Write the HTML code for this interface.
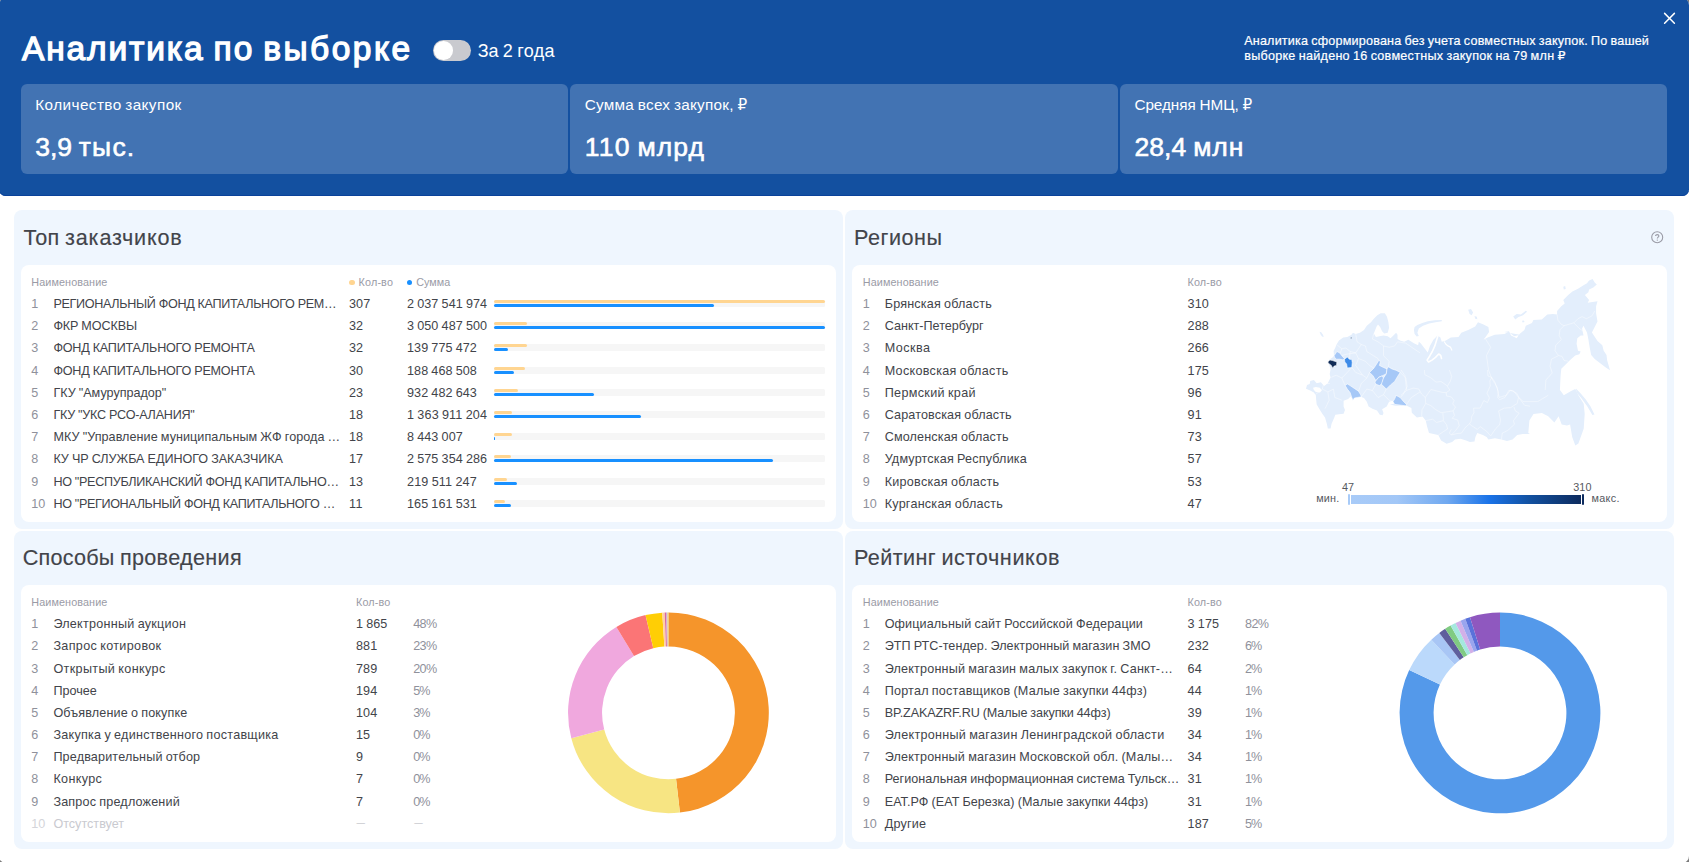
<!DOCTYPE html>
<html lang="ru"><head><meta charset="utf-8"><title>Аналитика по выборке</title><style>
html,body{margin:0;padding:0}
body{width:1689px;height:862px;overflow:hidden;background:#7a7a7a;position:relative;font-family:"Liberation Sans", "DejaVu Sans", sans-serif;}
h1,h2{margin:0;padding:0}
.b{position:absolute;display:block}
.t{position:absolute;white-space:pre;font-family:"Liberation Sans", "DejaVu Sans", sans-serif;font-weight:400}
</style></head><body>
<div class="modal">
<div class="b" style="left:-1.00px;top:-2.00px;width:1690.00px;height:865.00px;background:#fff;border-radius:7px;"></div>
<header>
<div class="b" style="left:-1.00px;top:-2.00px;width:1690.00px;height:198.00px;background:#1350a0;border-radius:7px 7px 6.5px 6.5px;box-shadow:inset 0 -1px 0 #0a429a;"></div>
<div class="b" style="left:21.00px;top:83.90px;width:546.85px;height:89.90px;background:rgba(255,255,255,0.2);border-radius:6px;"></div>
<div class="b" style="left:570.13px;top:83.90px;width:547.77px;height:89.90px;background:rgba(255,255,255,0.2);border-radius:6px;"></div>
<div class="b" style="left:1120.05px;top:83.90px;width:547.45px;height:89.90px;background:rgba(255,255,255,0.2);border-radius:6px;"></div>
<div class="b" style="left:432.80px;top:40.00px;width:38.20px;height:21.00px;background:#c9cacf;border-radius:10.5px;"></div>
<div class="b" style="left:434.30px;top:41.20px;width:18.60px;height:18.60px;background:#fff;border-radius:9.3px;"></div>
<svg class="b" style="left:1662px;top:11px" width="15" height="15" viewBox="0 0 15 15"><path d="M2.6 2.4 L12.4 12.2 M12.4 2.4 L2.6 12.2" stroke="#fff" stroke-width="1.5" stroke-linecap="round" fill="none"/></svg>
<h1 class="t" style="left:22.00px;top:25.00px;font-size:33.5px;line-height:47px;color:#fff;letter-spacing:2.115px;word-spacing:-2.483px;-webkit-text-stroke:1.3px #fff;"><span style="position:absolute;left:0.00px;top:0;letter-spacing:1.847px">Аналитика</span> <span style="position:absolute;left:191.41px;top:0;letter-spacing:2.109px">по</span> <span style="position:absolute;left:241.34px;top:0;letter-spacing:2.458px">выборке</span></h1>
<div class="t" style="left:477.80px;top:39.00px;font-size:18px;line-height:25px;color:#fff;letter-spacing:0.152px;word-spacing:-0.683px;"><span style="position:absolute;left:0.00px;top:0;letter-spacing:-0.203px">За</span> <span style="position:absolute;left:24.95px;top:0;letter-spacing:0.109px">2</span> <span style="position:absolute;left:39.53px;top:0;letter-spacing:0.340px">года</span></div>
<div class="t" style="left:1244.20px;top:32.00px;font-size:12.6px;line-height:18px;color:#fff;letter-spacing:0.187px;word-spacing:-0.600px;-webkit-text-stroke:0.2px #fff;">Аналитика сформирована без учета совместных закупок. По вашей</div>
<div class="t" style="left:1244.20px;top:47.00px;font-size:12.6px;line-height:18px;color:#fff;letter-spacing:0.262px;word-spacing:-0.654px;-webkit-text-stroke:0.2px #fff;">выборке найдено 16 совместных закупок на 79 млн ₽</div>
<div class="t" style="left:35.30px;top:94.00px;font-size:15.3px;line-height:21px;color:#fff;letter-spacing:0.417px;word-spacing:-1.042px;">Количество закупок</div>
<div class="t" style="left:35.30px;top:129.00px;font-size:26.5px;line-height:37px;color:#fff;letter-spacing:0.690px;word-spacing:-1.346px;-webkit-text-stroke:0.6px #fff;"><span style="position:absolute;left:0.00px;top:0;letter-spacing:-0.036px">3,9</span> <span style="position:absolute;left:43.45px;top:0;letter-spacing:1.234px">тыс.</span></div>
<div class="t" style="left:584.80px;top:94.00px;font-size:15.3px;line-height:21px;color:#fff;letter-spacing:0.246px;word-spacing:-0.761px;">Сумма всех закупок, ₽</div>
<div class="t" style="left:584.80px;top:129.00px;font-size:26.5px;line-height:37px;color:#fff;letter-spacing:1.125px;word-spacing:-1.781px;-webkit-text-stroke:0.6px #fff;"><span style="position:absolute;left:0.00px;top:0;letter-spacing:1.266px">110</span> <span style="position:absolute;left:52.75px;top:0;letter-spacing:1.020px">млрд</span></div>
<div class="t" style="left:1134.40px;top:94.00px;font-size:15.3px;line-height:21px;color:#fff;letter-spacing:-0.053px;word-spacing:-0.400px;">Средняя НМЦ, ₽</div>
<div class="t" style="left:1134.40px;top:129.00px;font-size:26.5px;line-height:37px;color:#fff;letter-spacing:0.473px;word-spacing:-1.114px;-webkit-text-stroke:0.6px #fff;"><span style="position:absolute;left:0.00px;top:0;letter-spacing:0.125px">28,4</span> <span style="position:absolute;left:58.80px;top:0;letter-spacing:0.938px">млн</span></div>
</header>
<main>
<section>
<div class="b" style="left:14.00px;top:210.00px;width:829.00px;height:319.00px;background:#eff6fe;border-radius:8px;"></div>
<div class="b" style="left:21.00px;top:265.00px;width:815.00px;height:257.00px;background:#fff;border-radius:8px;"></div>
<div class="b" style="left:349.00px;top:279.70px;width:5.60px;height:5.60px;background:#ffd591;border-radius:3px;"></div>
<div class="b" style="left:406.90px;top:280.00px;width:5.20px;height:5.20px;background:#1890ff;border-radius:3px;"></div>
<div class="b" style="left:493.90px;top:300.00px;width:331.20px;height:7.00px;background:#f6f6f6;border-radius:1.5px;"></div>
<div class="b" style="left:493.90px;top:300.00px;width:331.20px;height:3.00px;background:#ffd591;border-radius:1.5px;"></div>
<div class="b" style="left:493.90px;top:304.00px;width:220.42px;height:3.00px;background:#1890ff;border-radius:1.5px;"></div>
<div class="b" style="left:493.90px;top:322.00px;width:331.20px;height:7.00px;background:#f6f6f6;border-radius:1.5px;"></div>
<div class="b" style="left:493.90px;top:322.00px;width:32.96px;height:3.00px;background:#ffd591;border-radius:1.5px;"></div>
<div class="b" style="left:493.90px;top:326.00px;width:331.20px;height:3.00px;background:#1890ff;border-radius:1.5px;"></div>
<div class="b" style="left:493.90px;top:344.00px;width:331.20px;height:7.00px;background:#f6f6f6;border-radius:1.5px;"></div>
<div class="b" style="left:493.90px;top:344.00px;width:32.96px;height:3.00px;background:#ffd591;border-radius:1.5px;"></div>
<div class="b" style="left:493.90px;top:348.00px;width:14.38px;height:3.00px;background:#1890ff;border-radius:1.5px;"></div>
<div class="b" style="left:493.90px;top:367.00px;width:331.20px;height:7.00px;background:#f6f6f6;border-radius:1.5px;"></div>
<div class="b" style="left:493.90px;top:367.00px;width:30.90px;height:3.00px;background:#ffd591;border-radius:1.5px;"></div>
<div class="b" style="left:493.90px;top:371.00px;width:19.66px;height:3.00px;background:#1890ff;border-radius:1.5px;"></div>
<div class="b" style="left:493.90px;top:389.00px;width:331.20px;height:7.00px;background:#f6f6f6;border-radius:1.5px;"></div>
<div class="b" style="left:493.90px;top:389.00px;width:23.69px;height:3.00px;background:#ffd591;border-radius:1.5px;"></div>
<div class="b" style="left:493.90px;top:393.00px;width:100.44px;height:3.00px;background:#1890ff;border-radius:1.5px;"></div>
<div class="b" style="left:493.90px;top:411.00px;width:331.20px;height:7.00px;background:#f6f6f6;border-radius:1.5px;"></div>
<div class="b" style="left:493.90px;top:411.00px;width:18.54px;height:3.00px;background:#ffd591;border-radius:1.5px;"></div>
<div class="b" style="left:493.90px;top:415.00px;width:147.28px;height:3.00px;background:#1890ff;border-radius:1.5px;"></div>
<div class="b" style="left:493.90px;top:433.00px;width:331.20px;height:7.00px;background:#f6f6f6;border-radius:1.5px;"></div>
<div class="b" style="left:493.90px;top:433.00px;width:18.54px;height:3.00px;background:#ffd591;border-radius:1.5px;"></div>
<div class="b" style="left:493.90px;top:437.00px;width:0.12px;height:3.00px;background:#1890ff;border-radius:1.5px;"></div>
<div class="b" style="left:493.90px;top:455.00px;width:331.20px;height:7.00px;background:#f6f6f6;border-radius:1.5px;"></div>
<div class="b" style="left:493.90px;top:455.00px;width:17.51px;height:3.00px;background:#ffd591;border-radius:1.5px;"></div>
<div class="b" style="left:493.90px;top:459.00px;width:278.81px;height:3.00px;background:#1890ff;border-radius:1.5px;"></div>
<div class="b" style="left:493.90px;top:478.00px;width:331.20px;height:7.00px;background:#f6f6f6;border-radius:1.5px;"></div>
<div class="b" style="left:493.90px;top:478.00px;width:13.39px;height:3.00px;background:#ffd591;border-radius:1.5px;"></div>
<div class="b" style="left:493.90px;top:482.00px;width:23.03px;height:3.00px;background:#1890ff;border-radius:1.5px;"></div>
<div class="b" style="left:493.90px;top:500.00px;width:331.20px;height:7.00px;background:#f6f6f6;border-radius:1.5px;"></div>
<div class="b" style="left:493.90px;top:500.00px;width:11.33px;height:3.00px;background:#ffd591;border-radius:1.5px;"></div>
<div class="b" style="left:493.90px;top:504.00px;width:17.13px;height:3.00px;background:#1890ff;border-radius:1.5px;"></div>
<h2 class="t" style="left:23.40px;top:223.00px;font-size:21.6px;line-height:30px;color:#42444a;letter-spacing:0.722px;word-spacing:-1.363px;-webkit-text-stroke:0.15px #42444a;"><span style="position:absolute;left:0.00px;top:0;letter-spacing:0.354px">Топ</span> <span style="position:absolute;left:41.66px;top:0;letter-spacing:0.833px">заказчиков</span></h2>
<div class="t" style="left:31.30px;top:275.00px;font-size:10.8px;line-height:15px;color:#9a9ba6;letter-spacing:0.108px;">Наименование</div>
<div class="t" style="left:358.60px;top:275.00px;font-size:10.8px;line-height:15px;color:#9a9ba6;letter-spacing:0.143px;">Кол-во</div>
<div class="t" style="left:416.20px;top:275.00px;font-size:10.8px;line-height:15px;color:#9a9ba6;letter-spacing:0.019px;">Сумма</div>
<div class="t" style="left:31.30px;top:295.00px;font-size:12.6px;line-height:18px;color:#8f919b;letter-spacing:0.062px;">1</div>
<div class="t" style="left:53.40px;top:295.00px;font-size:12.6px;line-height:18px;color:#42444a;letter-spacing:-0.325px;word-spacing:-0.050px;">РЕГИОНАЛЬНЫЙ ФОНД КАПИТАЛЬНОГО РЕМ…</div>
<div class="t" style="left:349.00px;top:295.00px;font-size:12.6px;line-height:18px;color:#42444a;letter-spacing:0.073px;">307</div>
<div class="t" style="left:407.00px;top:295.00px;font-size:12.6px;line-height:18px;color:#42444a;letter-spacing:0.073px;word-spacing:-0.448px;">2 037 541 974</div>
<div class="t" style="left:31.30px;top:317.00px;font-size:12.6px;line-height:18px;color:#8f919b;letter-spacing:0.062px;">2</div>
<div class="t" style="left:53.40px;top:317.00px;font-size:12.6px;line-height:18px;color:#42444a;letter-spacing:-0.109px;word-spacing:-0.406px;">ФКР МОСКВЫ</div>
<div class="t" style="left:349.00px;top:317.00px;font-size:12.6px;line-height:18px;color:#42444a;letter-spacing:0.070px;">32</div>
<div class="t" style="left:407.00px;top:317.00px;font-size:12.6px;line-height:18px;color:#42444a;letter-spacing:0.073px;word-spacing:-0.448px;">3 050 487 500</div>
<div class="t" style="left:31.30px;top:339.00px;font-size:12.6px;line-height:18px;color:#8f919b;letter-spacing:0.062px;">3</div>
<div class="t" style="left:53.40px;top:339.00px;font-size:12.6px;line-height:18px;color:#42444a;letter-spacing:-0.212px;word-spacing:-0.163px;">ФОНД КАПИТАЛЬНОГО РЕМОНТА</div>
<div class="t" style="left:349.00px;top:339.00px;font-size:12.6px;line-height:18px;color:#42444a;letter-spacing:0.070px;">32</div>
<div class="t" style="left:407.00px;top:339.00px;font-size:12.6px;line-height:18px;color:#42444a;letter-spacing:0.073px;word-spacing:-0.448px;">139 775 472</div>
<div class="t" style="left:31.30px;top:362.00px;font-size:12.6px;line-height:18px;color:#8f919b;letter-spacing:0.062px;">4</div>
<div class="t" style="left:53.40px;top:362.00px;font-size:12.6px;line-height:18px;color:#42444a;letter-spacing:-0.212px;word-spacing:-0.163px;">ФОНД КАПИТАЛЬНОГО РЕМОНТА</div>
<div class="t" style="left:349.00px;top:362.00px;font-size:12.6px;line-height:18px;color:#42444a;letter-spacing:0.070px;">30</div>
<div class="t" style="left:407.00px;top:362.00px;font-size:12.6px;line-height:18px;color:#42444a;letter-spacing:0.073px;word-spacing:-0.448px;">188 468 508</div>
<div class="t" style="left:31.30px;top:384.00px;font-size:12.6px;line-height:18px;color:#8f919b;letter-spacing:0.062px;">5</div>
<div class="t" style="left:53.40px;top:384.00px;font-size:12.6px;line-height:18px;color:#42444a;letter-spacing:-0.015px;word-spacing:-0.360px;">ГКУ &quot;Амурупрадор&quot;</div>
<div class="t" style="left:349.00px;top:384.00px;font-size:12.6px;line-height:18px;color:#42444a;letter-spacing:0.070px;">23</div>
<div class="t" style="left:407.00px;top:384.00px;font-size:12.6px;line-height:18px;color:#42444a;letter-spacing:0.073px;word-spacing:-0.448px;">932 482 643</div>
<div class="t" style="left:31.30px;top:406.00px;font-size:12.6px;line-height:18px;color:#8f919b;letter-spacing:0.062px;">6</div>
<div class="t" style="left:53.40px;top:406.00px;font-size:12.6px;line-height:18px;color:#42444a;letter-spacing:-0.235px;word-spacing:-0.140px;">ГКУ &quot;УКС РСО-АЛАНИЯ&quot;</div>
<div class="t" style="left:349.00px;top:406.00px;font-size:12.6px;line-height:18px;color:#42444a;letter-spacing:0.070px;">18</div>
<div class="t" style="left:407.00px;top:406.00px;font-size:12.6px;line-height:18px;color:#42444a;letter-spacing:0.167px;word-spacing:-0.542px;">1 363 911 204</div>
<div class="t" style="left:31.30px;top:428.00px;font-size:12.6px;line-height:18px;color:#8f919b;letter-spacing:0.062px;">7</div>
<div class="t" style="left:53.40px;top:428.00px;font-size:12.6px;line-height:18px;color:#42444a;letter-spacing:0.052px;word-spacing:-0.427px;">МКУ &quot;Управление муниципальным ЖФ города …</div>
<div class="t" style="left:349.00px;top:428.00px;font-size:12.6px;line-height:18px;color:#42444a;letter-spacing:0.070px;">18</div>
<div class="t" style="left:407.00px;top:428.00px;font-size:12.6px;line-height:18px;color:#42444a;letter-spacing:0.074px;word-spacing:-0.449px;">8 443 007</div>
<div class="t" style="left:31.30px;top:450.00px;font-size:12.6px;line-height:18px;color:#8f919b;letter-spacing:0.062px;">8</div>
<div class="t" style="left:53.40px;top:450.00px;font-size:12.6px;line-height:18px;color:#42444a;letter-spacing:-0.034px;word-spacing:-0.377px;">КУ ЧР СЛУЖБА ЕДИНОГО ЗАКАЗЧИКА</div>
<div class="t" style="left:349.00px;top:450.00px;font-size:12.6px;line-height:18px;color:#42444a;letter-spacing:0.070px;">17</div>
<div class="t" style="left:407.00px;top:450.00px;font-size:12.6px;line-height:18px;color:#42444a;letter-spacing:0.073px;word-spacing:-0.448px;">2 575 354 286</div>
<div class="t" style="left:31.30px;top:473.00px;font-size:12.6px;line-height:18px;color:#8f919b;letter-spacing:0.062px;">9</div>
<div class="t" style="left:53.40px;top:473.00px;font-size:12.6px;line-height:18px;color:#42444a;letter-spacing:-0.302px;word-spacing:-0.079px;">НО &quot;РЕСПУБЛИКАНСКИЙ ФОНД КАПИТАЛЬНО…</div>
<div class="t" style="left:349.00px;top:473.00px;font-size:12.6px;line-height:18px;color:#42444a;letter-spacing:0.070px;">13</div>
<div class="t" style="left:407.00px;top:473.00px;font-size:12.6px;line-height:18px;color:#42444a;letter-spacing:0.177px;word-spacing:-0.552px;">219 511 247</div>
<div class="t" style="left:31.30px;top:495.00px;font-size:12.6px;line-height:18px;color:#8f919b;letter-spacing:0.070px;">10</div>
<div class="t" style="left:53.40px;top:495.00px;font-size:12.6px;line-height:18px;color:#42444a;letter-spacing:-0.360px;word-spacing:0.142px;">НО &quot;РЕГИОНАЛЬНЫЙ ФОНД КАПИТАЛЬНОГО …</div>
<div class="t" style="left:349.00px;top:495.00px;font-size:12.6px;line-height:18px;color:#42444a;letter-spacing:0.539px;">11</div>
<div class="t" style="left:407.00px;top:495.00px;font-size:12.6px;line-height:18px;color:#42444a;letter-spacing:0.073px;word-spacing:-0.448px;">165 161 531</div>
</section>
<section>
<div class="b" style="left:845.00px;top:210.00px;width:829.00px;height:319.00px;background:#eff6fe;border-radius:8px;"></div>
<div class="b" style="left:852.00px;top:265.00px;width:815.00px;height:257.00px;background:#fff;border-radius:8px;"></div>
<svg class="b" style="left:1650px;top:230px" width="15" height="15" viewBox="0 0 15 15"><circle cx="7.2" cy="7.2" r="5.5" fill="none" stroke="#9a9ba6" stroke-width="1.1"/><path d="M5.6 5.9 C5.6 4.2 8.9 4.2 8.9 6 C8.9 7.1 7.3 7.3 7.3 8.6" fill="none" stroke="#9a9ba6" stroke-width="1.1"/><circle cx="7.3" cy="10.1" r="0.7" fill="#9a9ba6"/></svg>
<svg class="b" style="left:1300px;top:270px" width="320" height="190" viewBox="1300 270 320 190"><g stroke="#fff" stroke-width="0.6" stroke-linejoin="round"><polygon points="1336.5,344.5 1339.0,340.4 1343.2,337.6 1347.3,336.9 1351.5,334.8 1352.9,332.7 1355.7,334.1 1359.9,332.7 1364.0,329.9 1366.8,325.8 1371.0,322.3 1373.8,318.8 1377.3,315.3 1380.7,313.2 1384.9,313.2 1387.0,316.7 1388.4,322.3 1389.1,327.8 1387.7,332.7 1384.2,333.4 1382.1,331.3 1380.1,327.1 1378.0,324.4 1376.6,326.5 1375.2,329.9 1373.8,333.4 1375.9,336.9 1379.4,336.2 1383.5,335.5 1387.7,336.2 1390.5,338.3 1392.6,336.2 1396.1,332.7 1397.5,334.8 1397.5,339.0 1400.2,340.4 1400.0,340.4 1404.2,341.8 1408.4,339.7 1413.9,343.2 1418.1,345.2 1418.8,341.8 1420.9,343.4 1423.7,347.3 1427.8,352.6 1429.9,345.9 1433.4,339.7 1437.6,335.5 1440.4,337.6 1441.8,341.8 1445.9,340.4 1450.8,337.6 1458.5,336.9 1461.3,332.7 1468.2,329.9 1475.2,326.5 1478.0,322.3 1483.5,324.4 1488.4,327.1 1489.1,332.0 1485.6,336.9 1483.5,339.7 1487.7,337.6 1494.7,334.8 1504.4,334.1 1508.6,332.0 1514.2,336.2 1520.0,334.8 1504.2,332.0 1509.0,331.3 1511.1,335.4 1516.7,338.2 1519.5,334.0 1524.4,329.9 1525.8,325.7 1532.0,322.9 1533.4,320.1 1541.8,319.4 1547.3,314.5 1552.9,313.9 1557.1,314.5 1557.1,311.1 1561.3,306.2 1564.7,303.4 1563.3,299.9 1568.2,295.1 1572.4,291.6 1578.0,288.8 1583.5,285.3 1587.0,283.2 1589.1,280.4 1592.6,279.0 1594.7,282.5 1596.8,284.6 1593.3,287.4 1589.1,289.5 1588.4,292.3 1584.9,295.1 1589.1,299.9 1587.7,302.7 1597.5,301.3 1596.1,306.2 1596.1,313.2 1597.5,321.5 1594.7,327.1 1591.9,332.6 1594.7,336.8 1597.5,341.0 1602.3,345.2 1603.7,350.7 1606.5,354.9 1607.2,360.5 1610.0,370.2 1605.8,367.5 1600.2,363.3 1594.7,359.1 1591.2,354.9 1589.8,348.0 1588.4,339.6 1587.0,332.6 1584.9,328.5 1583.5,325.7 1582.1,328.5 1583.5,335.4 1580.7,335.4 1577.3,338.2 1576.6,343.8 1578.0,350.7 1580.7,351.4 1579.4,354.2 1575.2,355.6 1569.6,360.5 1565.4,364.7 1561.3,368.8 1560.6,375.8 1559.9,390.0 1560.7,391.1 1563.8,395.3 1571.1,391.1 1575.3,389.0 1578.4,395.3 1583.7,403.7 1584.7,414.1 1583.7,428.7 1578.4,443.4 1575.3,445.4 1572.2,437.1 1570.1,424.6 1567.0,425.6 1561.7,424.6 1558.6,416.2 1554.4,422.5 1548.2,416.2 1541.9,413.1 1533.5,414.1 1529.4,420.4 1528.3,432.9 1530.0,434.1 1522.8,434.1 1517.2,435.0 1512.6,439.6 1507.0,441.0 1501.4,439.6 1494.9,438.2 1488.4,439.6 1486.6,436.9 1482.9,435.0 1477.3,433.1 1475.4,436.9 1474.5,441.5 1469.9,442.0 1466.1,440.6 1460.6,438.7 1455.0,439.6 1452.2,442.0 1446.6,443.8 1441.1,440.6 1438.3,435.0 1433.6,434.1 1429.0,433.1 1427.1,426.6 1425.7,420.6 1422.5,416.4 1416.9,417.4 1411.8,412.7 1411.4,408.1 1406.7,405.7 1395.6,405.7 1390.0,404.4 1394.6,403.6 1392.8,400.8 1389.1,401.7 1386.7,406.4 1382.1,409.2 1383.5,412.9 1382.6,415.2 1379.8,414.7 1377.0,410.6 1372.4,408.7 1368.6,406.4 1366.8,401.7 1364.0,398.0 1361.2,397.1 1354.7,397.6 1352.9,400.4 1352.4,398.0 1350.6,396.6 1348.2,399.0 1343.6,400.8 1343.6,406.4 1345.0,410.1 1343.6,413.8 1339.0,414.3 1335.3,414.7 1334.3,417.5 1331.5,424.0 1330.6,428.6 1327.8,428.6 1326.9,424.0 1325.0,417.5 1322.3,413.8 1319.5,409.2 1316.7,404.5 1316.2,399.9 1315.8,395.3 1313.9,392.5 1310.2,390.6 1306.0,388.8 1307.0,385.0 1309.7,384.1 1310.2,380.9 1313.9,379.9 1316.7,383.2 1320.9,382.3 1324.1,386.0 1327.8,383.2 1330.6,377.6 1329.7,373.9 1330.6,369.3 1328.8,363.7 1329.5,359.5 1332.5,357.5 1334.0,355.7 1333.6,351.0 1335.4,347.5" fill="#e3eefc" stroke="none"/><polygon points="1319.5,331.7 1321.2,332.3 1323.0,334.8 1323.7,336.9 1322.0,336.5 1320.6,334.5" fill="#e3eefc" stroke="none"/><polygon points="1575.9,388.6 1580.5,393.2 1585.8,399.5 1590.4,406.2 1594.5,414.5 1592.4,414.9 1587.2,406.2 1581.6,398.4 1576.6,392.4" fill="#e3eefc" stroke="none"/><polygon points="1413.9,329.9 1414.6,327.1 1417.4,325.1 1422.3,323.0 1427.8,321.2 1434.8,320.3 1441.8,319.9 1441.8,321.2 1435.5,322.3 1429.2,323.4 1423.0,325.8 1418.8,328.5 1417.4,332.7 1418.8,335.9 1416.7,336.5 1414.6,334.1" fill="#e3eefc" stroke="none"/><polygon points="1468.2,309.7 1471.0,309.0 1473.1,312.5 1471.7,315.3 1469.6,313.9" fill="#e3eefc" stroke="none"/><polygon points="1474.5,316.0 1476.8,316.7 1477.4,319.2 1475.2,318.8" fill="#e3eefc" stroke="none"/><polygon points="1513.2,316.6 1516.7,313.9 1520.9,314.5 1525.8,310.7 1527.1,311.8 1523.0,315.2 1518.1,317.3 1515.3,319.4" fill="#e3eefc" stroke="none"/><polygon points="1522.0,320.8 1523.9,320.4 1524.5,322.1 1522.6,322.5" fill="#e3eefc" stroke="none"/><polygon points="1563.3,286.7 1565.2,286.1 1565.7,288.9 1563.8,289.5" fill="#e3eefc" stroke="none"/><polygon points="1313.0,387.8 1315.8,387.1 1319.9,387.8 1321.8,390.6 1319.9,392.5 1315.8,392.0 1313.9,390.1" fill="#fff" stroke="none"/><polygon points="1334.1,355.7 1336.9,351.5 1339.7,352.9 1341.8,355.7 1344.3,358.5 1343.2,359.9 1339.7,359.2 1336.5,359.2 1334.8,357.8" fill="#a6c8f7"/><polygon points="1369.6,372.4 1373.8,368.2 1376.6,364.0 1378.7,360.6 1380.5,361.3 1379.4,365.4 1383.5,367.5 1387.0,368.9 1386.3,373.8 1382.1,375.9 1378.7,377.3 1375.9,380.7 1373.1,375.9 1371.0,373.8" fill="#a6c8f7"/><polygon points="1375.9,380.7 1378.7,377.3 1382.1,375.9 1383.5,378.0 1382.1,383.5 1379.4,385.6 1375.9,384.2 1374.9,382.1" fill="#a6c8f7"/><polygon points="1387.0,368.9 1388.4,366.8 1391.9,368.9 1396.1,370.3 1400.2,372.4 1397.5,376.6 1394.7,381.4 1390.5,384.9 1386.3,389.1 1382.8,385.6 1381.4,384.2 1383.5,378.0 1386.3,373.8" fill="#a6c8f7"/><polygon points="1345.2,385.6 1347.3,383.9 1350.1,385.6 1354.3,388.4 1358.5,391.2 1360.6,394.7 1361.3,396.8 1357.1,397.5 1354.3,398.1 1352.9,400.2 1351.8,397.5 1350.1,392.6 1347.3,389.1" fill="#a6c8f7"/><polygon points="1396.1,395.4 1400.2,397.5 1403.0,400.9 1406.5,404.4 1405.8,405.8 1400.2,405.1 1394.7,404.4 1393.0,401.6 1394.7,398.8" fill="#a6c8f7"/><polygon points="1344.5,359.2 1347.3,357.1 1349.4,359.2 1351.8,359.6 1352.2,362.6 1351.8,367.5 1347.3,367.9 1346.6,364.0 1344.8,362.0" fill="#3d8be8"/><polygon points="1327.8,362.0 1329.9,359.9 1332.7,360.6 1336.9,362.0 1336.5,365.4 1334.1,366.1 1332.7,368.2 1331.3,365.4 1328.5,363.3" fill="#0f2b57"/><polyline points="1437.9,335.9 1436.5,340.4 1434.8,345.9 1432.3,351.5 1429.9,355.7 1427.1,360.1 1428.5,362.0 1432.0,360.1 1435.5,357.4 1438.7,354.0 1440.7,355.4 1441.5,358.5" fill="none" stroke="#fff" stroke-width="1.6" stroke-linecap="round"/><polyline points="1444.3,341.8 1445.9,344.3 1448.0,345.9 1450.4,347.1 1451.8,350.1" fill="none" stroke="#fff" stroke-width="1.2" stroke-linecap="round"/><polyline points="1485.5,338.9 1490.7,347.3 1486.5,355.6 1488.6,370.3 1491.8,378.6 1497.0,387.0 1499.1,397.4 1506.4,395.3 1510.6,390.1 1516.8,393.2 1518.9,397.4 1523.1,401.6 1537.7,401.6 1548.2,395.3" fill="none" stroke="#fff" stroke-width="0.7" stroke-opacity="0.6"/><polyline points="1557.1,314.5 1557.8,320.1 1561.3,324.3 1564.0,325.7 1559.9,329.9 1559.2,335.4 1561.3,339.6 1555.7,345.2 1555.0,350.7 1558.5,355.6 1551.5,359.1 1550.1,366.1 1552.2,373.0 1545.9,380.0 1545.2,390.0" fill="none" stroke="#fff" stroke-width="0.7" stroke-opacity="0.6"/><polyline points="1564.0,325.7 1573.8,322.9 1578.0,318.7 1582.1,316.6 1586.3,318.7 1591.9,315.9 1594.7,311.1" fill="none" stroke="#fff" stroke-width="0.7" stroke-opacity="0.6"/><polyline points="1573.8,322.9 1579.4,328.5 1583.5,331.3" fill="none" stroke="#fff" stroke-width="0.7" stroke-opacity="0.6"/><polyline points="1558.5,355.6 1562.0,356.3 1564.0,360.5 1568.2,361.2" fill="none" stroke="#fff" stroke-width="0.7" stroke-opacity="0.6"/><polyline points="1424.4,370.0 1424.8,374.6 1430.9,377.9 1436.0,382.1 1441.1,381.6 1446.6,385.3 1449.9,390.0 1446.2,392.7 1446.6,396.0 1451.3,396.9 1454.1,400.6 1452.7,403.9 1455.5,407.1 1453.1,410.9 1454.5,415.5 1452.2,418.3 1457.8,420.1 1459.2,425.7 1455.0,431.3 1451.3,435.0" fill="none" stroke="#fff" stroke-width="0.7" stroke-opacity="0.6"/><polyline points="1449.4,370.0 1451.7,376.5 1450.4,381.1 1447.6,385.8" fill="none" stroke="#fff" stroke-width="0.7" stroke-opacity="0.6"/><polyline points="1401.1,395.1 1406.7,390.4 1413.2,388.1 1418.8,389.0 1421.6,394.1 1425.3,397.4 1430.9,389.5 1436.4,390.9 1442.0,392.3 1446.2,392.7" fill="none" stroke="#fff" stroke-width="0.7" stroke-opacity="0.6"/><polyline points="1425.3,397.4 1425.7,403.4 1422.0,409.9 1421.6,416.0" fill="none" stroke="#fff" stroke-width="0.7" stroke-opacity="0.6"/><polyline points="1425.7,403.4 1430.9,405.7 1435.5,409.5 1441.1,412.7 1453.1,410.9" fill="none" stroke="#fff" stroke-width="0.7" stroke-opacity="0.6"/><polyline points="1442.9,413.2 1443.4,420.6 1446.6,424.8 1447.6,429.0 1443.9,431.3 1438.3,435.0" fill="none" stroke="#fff" stroke-width="0.7" stroke-opacity="0.6"/><polyline points="1425.7,420.6 1432.7,419.2 1436.4,422.5 1443.4,420.6" fill="none" stroke="#fff" stroke-width="0.7" stroke-opacity="0.6"/><polyline points="1487.5,370.0 1488.0,376.0 1491.7,377.4 1489.8,381.1 1490.3,385.8 1487.0,393.2 1489.4,397.9 1487.5,402.5 1483.8,400.6 1480.1,408.1 1473.6,408.1 1474.0,412.7 1471.7,416.4 1471.2,421.1 1469.4,423.9 1471.7,425.7 1477.3,429.4 1480.1,426.6 1486.6,431.3 1490.7,435.9 1495.8,428.5 1499.6,424.8 1500.5,420.1 1498.6,410.9 1504.2,408.1 1510.7,407.6 1517.2,403.4 1518.6,397.4" fill="none" stroke="#fff" stroke-width="0.7" stroke-opacity="0.6"/><polyline points="1491.7,377.4 1494.9,382.1 1498.2,391.4 1497.7,397.9 1499.6,399.7 1505.1,397.4 1508.8,390.4 1513.5,390.9 1518.6,397.4 1524.6,405.3 1530.0,406.2" fill="none" stroke="#fff" stroke-width="0.7" stroke-opacity="0.6"/><polyline points="1469.4,423.9 1465.2,427.6 1461.5,433.1 1456.9,433.6 1451.3,435.0 1449.4,433.1 1451.3,429.4" fill="none" stroke="#fff" stroke-width="0.7" stroke-opacity="0.6"/><polyline points="1514.0,407.1 1515.3,410.9 1519.1,413.2 1513.5,420.6 1514.4,424.3 1507.9,430.4 1502.3,433.1 1501.4,439.6" fill="none" stroke="#fff" stroke-width="0.7" stroke-opacity="0.6"/><polyline points="1401.1,370.0 1404.9,375.6 1405.8,383.0 1406.7,390.4" fill="none" stroke="#fff" stroke-width="0.7" stroke-opacity="0.6"/><polyline points="1336.5,344.5 1341.8,348.7 1345.9,348.0 1350.1,351.5 1355.7,352.9 1361.3,344.5 1365.4,345.9 1366.8,351.5 1372.4,355.0 1378.0,358.5 1378.7,360.6" fill="none" stroke="#fff" stroke-width="0.7" stroke-opacity="0.6"/><polyline points="1355.7,334.1 1357.1,341.8 1361.3,344.5" fill="none" stroke="#fff" stroke-width="0.7" stroke-opacity="0.6"/><polyline points="1373.8,333.4 1372.4,339.0 1378.0,341.8 1383.5,345.9 1389.1,347.3 1394.7,345.9 1397.5,341.8 1405.8,343.2 1420.0,352.9" fill="none" stroke="#fff" stroke-width="0.7" stroke-opacity="0.6"/><polyline points="1383.5,345.9 1383.5,355.7 1389.1,361.3 1388.4,366.8" fill="none" stroke="#fff" stroke-width="0.7" stroke-opacity="0.6"/><polyline points="1341.8,355.7 1345.9,354.3 1355.7,352.9 1358.5,358.5 1365.4,361.3 1369.6,365.4 1373.8,368.2" fill="none" stroke="#fff" stroke-width="0.7" stroke-opacity="0.6"/><polyline points="1351.8,367.5 1355.7,372.4 1362.6,375.2 1366.8,378.0 1369.6,372.4" fill="none" stroke="#fff" stroke-width="0.7" stroke-opacity="0.6"/><polyline points="1331.3,377.3 1336.2,375.2 1341.8,378.0 1345.2,385.6" fill="none" stroke="#fff" stroke-width="0.7" stroke-opacity="0.6"/><polyline points="1341.8,378.0 1347.3,372.4 1351.8,367.5" fill="none" stroke="#fff" stroke-width="0.7" stroke-opacity="0.6"/><polyline points="1361.3,396.8 1366.8,389.1 1372.4,390.5 1375.9,384.2" fill="none" stroke="#fff" stroke-width="0.7" stroke-opacity="0.6"/><polyline points="1372.4,390.5 1378.0,397.5 1383.5,394.7 1386.3,389.1" fill="none" stroke="#fff" stroke-width="0.7" stroke-opacity="0.6"/><polyline points="1383.5,394.7 1389.1,400.2 1393.0,401.6" fill="none" stroke="#fff" stroke-width="0.7" stroke-opacity="0.6"/><polyline points="1400.2,372.4 1405.8,378.0 1407.2,386.3 1403.0,394.7 1400.2,397.5" fill="none" stroke="#fff" stroke-width="0.7" stroke-opacity="0.6"/><polyline points="1406.5,404.4 1411.4,397.5 1420.0,391.9" fill="none" stroke="#fff" stroke-width="0.7" stroke-opacity="0.6"/><polyline points="1315.3,394.7 1322.3,389.1 1327.8,391.9 1333.4,389.1 1334.8,397.5 1341.8,400.2" fill="none" stroke="#fff" stroke-width="0.7" stroke-opacity="0.6"/><polyline points="1322.3,389.1 1323.7,383.5 1329.9,383.5" fill="none" stroke="#fff" stroke-width="0.7" stroke-opacity="0.6"/><polyline points="1327.8,391.9 1329.2,400.2 1325.1,408.6" fill="none" stroke="#fff" stroke-width="0.7" stroke-opacity="0.6"/><polyline points="1358.5,358.5 1355.7,365.4 1362.6,375.2" fill="none" stroke="#fff" stroke-width="0.7" stroke-opacity="0.6"/><polyline points="1366.8,378.0 1361.3,383.5 1358.5,391.2" fill="none" stroke="#fff" stroke-width="0.7" stroke-opacity="0.6"/><polyline points="1341.8,348.7 1340.4,352.9" fill="none" stroke="#fff" stroke-width="0.7" stroke-opacity="0.6"/><polyline points="1350.1,351.5 1349.4,359.2" fill="none" stroke="#fff" stroke-width="0.7" stroke-opacity="0.6"/><circle cx="1351.2" cy="337.9" r="0.7" fill="#7d8fa8" stroke="none"/></g></svg>
<div class="b" style="left:1350.60px;top:495.20px;width:230.60px;height:9.00px;background:linear-gradient(90deg,#a8cbf8 0%,#a2c7f7 20%,#6fa8f0 42%,#1a73e8 60%,#12509f 78%,#0d2b5e 100%);border-radius:0px;"></div>
<div class="b" style="left:1347.60px;top:494.20px;width:2.00px;height:10.80px;background:#a8cbf8;border-radius:1px;"></div>
<div class="b" style="left:1582.20px;top:494.20px;width:2.00px;height:10.80px;background:#0d2b5e;border-radius:1px;"></div>
<h2 class="t" style="left:854.00px;top:223.00px;font-size:21.6px;line-height:30px;color:#42444a;letter-spacing:0.529px;-webkit-text-stroke:0.15px #42444a;">Регионы</h2>
<div class="t" style="left:862.80px;top:275.00px;font-size:10.8px;line-height:15px;color:#9a9ba6;letter-spacing:0.108px;">Наименование</div>
<div class="t" style="left:1187.50px;top:275.00px;font-size:10.8px;line-height:15px;color:#9a9ba6;letter-spacing:0.143px;">Кол-во</div>
<div class="t" style="left:862.70px;top:295.00px;font-size:12.6px;line-height:18px;color:#8f919b;letter-spacing:0.062px;">1</div>
<div class="t" style="left:884.70px;top:295.00px;font-size:12.6px;line-height:18px;color:#42444a;letter-spacing:0.178px;word-spacing:-0.537px;">Брянская область</div>
<div class="t" style="left:1187.60px;top:295.00px;font-size:12.6px;line-height:18px;color:#42444a;letter-spacing:0.073px;">310</div>
<div class="t" style="left:862.70px;top:317.00px;font-size:12.6px;line-height:18px;color:#8f919b;letter-spacing:0.062px;">2</div>
<div class="t" style="left:884.70px;top:317.00px;font-size:12.6px;line-height:18px;color:#42444a;letter-spacing:0.005px;">Санкт-Петербург</div>
<div class="t" style="left:1187.60px;top:317.00px;font-size:12.6px;line-height:18px;color:#42444a;letter-spacing:0.073px;">288</div>
<div class="t" style="left:862.70px;top:339.00px;font-size:12.6px;line-height:18px;color:#8f919b;letter-spacing:0.062px;">3</div>
<div class="t" style="left:884.70px;top:339.00px;font-size:12.6px;line-height:18px;color:#42444a;letter-spacing:0.440px;">Москва</div>
<div class="t" style="left:1187.60px;top:339.00px;font-size:12.6px;line-height:18px;color:#42444a;letter-spacing:0.073px;">266</div>
<div class="t" style="left:862.70px;top:362.00px;font-size:12.6px;line-height:18px;color:#8f919b;letter-spacing:0.062px;">4</div>
<div class="t" style="left:884.70px;top:362.00px;font-size:12.6px;line-height:18px;color:#42444a;letter-spacing:0.299px;word-spacing:-0.674px;">Московская область</div>
<div class="t" style="left:1187.60px;top:362.00px;font-size:12.6px;line-height:18px;color:#42444a;letter-spacing:0.073px;">175</div>
<div class="t" style="left:862.70px;top:384.00px;font-size:12.6px;line-height:18px;color:#8f919b;letter-spacing:0.062px;">5</div>
<div class="t" style="left:884.70px;top:384.00px;font-size:12.6px;line-height:18px;color:#42444a;letter-spacing:0.322px;word-spacing:-0.697px;">Пермский край</div>
<div class="t" style="left:1187.60px;top:384.00px;font-size:12.6px;line-height:18px;color:#42444a;letter-spacing:0.070px;">96</div>
<div class="t" style="left:862.70px;top:406.00px;font-size:12.6px;line-height:18px;color:#8f919b;letter-spacing:0.062px;">6</div>
<div class="t" style="left:884.70px;top:406.00px;font-size:12.6px;line-height:18px;color:#42444a;letter-spacing:0.127px;word-spacing:-0.486px;">Саратовская область</div>
<div class="t" style="left:1187.60px;top:406.00px;font-size:12.6px;line-height:18px;color:#42444a;letter-spacing:0.070px;">91</div>
<div class="t" style="left:862.70px;top:428.00px;font-size:12.6px;line-height:18px;color:#8f919b;letter-spacing:0.062px;">7</div>
<div class="t" style="left:884.70px;top:428.00px;font-size:12.6px;line-height:18px;color:#42444a;letter-spacing:0.144px;word-spacing:-0.519px;">Смоленская область</div>
<div class="t" style="left:1187.60px;top:428.00px;font-size:12.6px;line-height:18px;color:#42444a;letter-spacing:0.070px;">73</div>
<div class="t" style="left:862.70px;top:450.00px;font-size:12.6px;line-height:18px;color:#8f919b;letter-spacing:0.062px;">8</div>
<div class="t" style="left:884.70px;top:450.00px;font-size:12.6px;line-height:18px;color:#42444a;letter-spacing:0.167px;word-spacing:-0.542px;">Удмуртская Республика</div>
<div class="t" style="left:1187.60px;top:450.00px;font-size:12.6px;line-height:18px;color:#42444a;letter-spacing:0.070px;">57</div>
<div class="t" style="left:862.70px;top:473.00px;font-size:12.6px;line-height:18px;color:#8f919b;letter-spacing:0.062px;">9</div>
<div class="t" style="left:884.70px;top:473.00px;font-size:12.6px;line-height:18px;color:#42444a;letter-spacing:0.259px;word-spacing:-0.634px;">Кировская область</div>
<div class="t" style="left:1187.60px;top:473.00px;font-size:12.6px;line-height:18px;color:#42444a;letter-spacing:0.070px;">53</div>
<div class="t" style="left:862.70px;top:495.00px;font-size:12.6px;line-height:18px;color:#8f919b;letter-spacing:0.070px;">10</div>
<div class="t" style="left:884.70px;top:495.00px;font-size:12.6px;line-height:18px;color:#42444a;letter-spacing:0.230px;word-spacing:-0.605px;">Курганская область</div>
<div class="t" style="left:1187.60px;top:495.00px;font-size:12.6px;line-height:18px;color:#42444a;letter-spacing:0.070px;">47</div>
<div class="t" style="left:1316.20px;top:491.00px;font-size:10.8px;line-height:15px;color:#55585e;letter-spacing:0.223px;">мин.</div>
<div class="t" style="left:1591.60px;top:491.00px;font-size:10.8px;line-height:15px;color:#55585e;letter-spacing:0.294px;">макс.</div>
<div class="t" style="left:1342.00px;top:480.00px;font-size:10.8px;line-height:15px;color:#55585e;letter-spacing:0.062px;">47</div>
<div class="t" style="left:1573.30px;top:480.00px;font-size:10.8px;line-height:15px;color:#55585e;letter-spacing:0.068px;">310</div>
</section>
<section>
<div class="b" style="left:14.00px;top:531.00px;width:829.00px;height:318.00px;background:#eff6fe;border-radius:8px;"></div>
<div class="b" style="left:21.00px;top:585.00px;width:815.00px;height:257.00px;background:#fff;border-radius:8px;"></div>
<svg class="b" style="left:560px;top:604px" width="220" height="220" viewBox="0 0 220 220"><path d="M108.45 8.45 A100.40 100.40 0 0 1 119.91 208.59 L116.03 174.82 A66.40 66.40 0 0 0 108.45 42.45 Z" fill="#f5952b"/><path d="M119.91 208.59 A100.40 100.40 0 0 1 11.30 134.20 L44.20 125.61 A66.40 66.40 0 0 0 116.03 174.82 Z" fill="#f7e583"/><path d="M11.30 134.20 A100.40 100.40 0 0 1 56.37 23.01 L74.01 52.08 A66.40 66.40 0 0 0 44.20 125.61 Z" fill="#f0a8de"/><path d="M56.37 23.01 A100.40 100.40 0 0 1 85.51 11.11 L93.28 44.21 A66.40 66.40 0 0 0 74.01 52.08 Z" fill="#fb7576"/><path d="M85.51 11.11 A100.40 100.40 0 0 1 102.26 8.64 L104.36 42.58 A66.40 66.40 0 0 0 93.28 44.21 Z" fill="#ffce05"/><path d="M102.26 8.64 A100.40 100.40 0 0 1 104.70 8.52 L105.97 42.50 A66.40 66.40 0 0 0 104.36 42.58 Z" fill="#ffcfa5"/><path d="M104.70 8.52 A100.40 100.40 0 0 1 106.17 8.48 L106.94 42.47 A66.40 66.40 0 0 0 105.97 42.50 Z" fill="#d96a9e"/><path d="M106.17 8.48 A100.40 100.40 0 0 1 107.31 8.46 L107.70 42.45 A66.40 66.40 0 0 0 106.94 42.47 Z" fill="#c8a2d8"/><path d="M107.31 8.46 A100.40 100.40 0 0 1 108.45 8.45 L108.45 42.45 A66.40 66.40 0 0 0 107.70 42.45 Z" fill="#e8d080"/></svg>
<h2 class="t" style="left:22.80px;top:543.00px;font-size:21.6px;line-height:30px;color:#42444a;letter-spacing:0.285px;word-spacing:-0.926px;-webkit-text-stroke:0.15px #42444a;"><span style="position:absolute;left:0.00px;top:0;letter-spacing:0.214px">Способы</span> <span style="position:absolute;left:97.09px;top:0;letter-spacing:0.334px">проведения</span></h2>
<div class="t" style="left:31.30px;top:595.00px;font-size:10.8px;line-height:15px;color:#9a9ba6;letter-spacing:0.108px;">Наименование</div>
<div class="t" style="left:356.00px;top:595.00px;font-size:10.8px;line-height:15px;color:#9a9ba6;letter-spacing:0.143px;">Кол-во</div>
<div class="t" style="left:31.30px;top:615.00px;font-size:12.6px;line-height:18px;color:#8f919b;letter-spacing:0.062px;">1</div>
<div class="t" style="left:53.40px;top:615.00px;font-size:12.6px;line-height:18px;color:#42444a;letter-spacing:0.246px;word-spacing:-0.621px;">Электронный аукцион</div>
<div class="t" style="left:356.00px;top:615.00px;font-size:12.6px;line-height:18px;color:#42444a;letter-spacing:0.070px;word-spacing:-0.430px;">1 865</div>
<div class="t" style="left:413.20px;top:615.00px;font-size:12.6px;line-height:18px;color:#8f919b;letter-spacing:-0.609px;">48%</div>
<div class="t" style="left:31.30px;top:637.00px;font-size:12.6px;line-height:18px;color:#8f919b;letter-spacing:0.062px;">2</div>
<div class="t" style="left:53.40px;top:637.00px;font-size:12.6px;line-height:18px;color:#42444a;letter-spacing:0.330px;word-spacing:-0.721px;">Запрос котировок</div>
<div class="t" style="left:356.00px;top:637.00px;font-size:12.6px;line-height:18px;color:#42444a;letter-spacing:0.073px;">881</div>
<div class="t" style="left:413.20px;top:637.00px;font-size:12.6px;line-height:18px;color:#8f919b;letter-spacing:-0.609px;">23%</div>
<div class="t" style="left:31.30px;top:660.00px;font-size:12.6px;line-height:18px;color:#8f919b;letter-spacing:0.062px;">3</div>
<div class="t" style="left:53.40px;top:660.00px;font-size:12.6px;line-height:18px;color:#42444a;letter-spacing:0.356px;word-spacing:-0.731px;">Открытый конкурс</div>
<div class="t" style="left:356.00px;top:660.00px;font-size:12.6px;line-height:18px;color:#42444a;letter-spacing:0.073px;">789</div>
<div class="t" style="left:413.20px;top:660.00px;font-size:12.6px;line-height:18px;color:#8f919b;letter-spacing:-0.609px;">20%</div>
<div class="t" style="left:31.30px;top:682.00px;font-size:12.6px;line-height:18px;color:#8f919b;letter-spacing:0.062px;">4</div>
<div class="t" style="left:53.40px;top:682.00px;font-size:12.6px;line-height:18px;color:#42444a;letter-spacing:0.016px;">Прочее</div>
<div class="t" style="left:356.00px;top:682.00px;font-size:12.6px;line-height:18px;color:#42444a;letter-spacing:0.073px;">194</div>
<div class="t" style="left:413.20px;top:682.00px;font-size:12.6px;line-height:18px;color:#8f919b;letter-spacing:-0.945px;">5%</div>
<div class="t" style="left:31.30px;top:704.00px;font-size:12.6px;line-height:18px;color:#8f919b;letter-spacing:0.062px;">5</div>
<div class="t" style="left:53.40px;top:704.00px;font-size:12.6px;line-height:18px;color:#42444a;letter-spacing:0.140px;word-spacing:-0.523px;">Объявление о покупке</div>
<div class="t" style="left:356.00px;top:704.00px;font-size:12.6px;line-height:18px;color:#42444a;letter-spacing:0.073px;">104</div>
<div class="t" style="left:413.20px;top:704.00px;font-size:12.6px;line-height:18px;color:#8f919b;letter-spacing:-0.945px;">3%</div>
<div class="t" style="left:31.30px;top:726.00px;font-size:12.6px;line-height:18px;color:#8f919b;letter-spacing:0.062px;">6</div>
<div class="t" style="left:53.40px;top:726.00px;font-size:12.6px;line-height:18px;color:#42444a;letter-spacing:0.254px;word-spacing:-0.665px;">Закупка у единственного поставщика</div>
<div class="t" style="left:356.00px;top:726.00px;font-size:12.6px;line-height:18px;color:#42444a;letter-spacing:0.070px;">15</div>
<div class="t" style="left:413.20px;top:726.00px;font-size:12.6px;line-height:18px;color:#8f919b;letter-spacing:-0.945px;">0%</div>
<div class="t" style="left:31.30px;top:748.00px;font-size:12.6px;line-height:18px;color:#8f919b;letter-spacing:0.062px;">7</div>
<div class="t" style="left:53.40px;top:748.00px;font-size:12.6px;line-height:18px;color:#42444a;letter-spacing:0.156px;word-spacing:-0.531px;">Предварительный отбор</div>
<div class="t" style="left:356.00px;top:748.00px;font-size:12.6px;line-height:18px;color:#42444a;letter-spacing:0.062px;">9</div>
<div class="t" style="left:413.20px;top:748.00px;font-size:12.6px;line-height:18px;color:#8f919b;letter-spacing:-0.945px;">0%</div>
<div class="t" style="left:31.30px;top:770.00px;font-size:12.6px;line-height:18px;color:#8f919b;letter-spacing:0.062px;">8</div>
<div class="t" style="left:53.40px;top:770.00px;font-size:12.6px;line-height:18px;color:#42444a;letter-spacing:0.344px;">Конкурс</div>
<div class="t" style="left:356.00px;top:770.00px;font-size:12.6px;line-height:18px;color:#42444a;letter-spacing:0.062px;">7</div>
<div class="t" style="left:413.20px;top:770.00px;font-size:12.6px;line-height:18px;color:#8f919b;letter-spacing:-0.945px;">0%</div>
<div class="t" style="left:31.30px;top:793.00px;font-size:12.6px;line-height:18px;color:#8f919b;letter-spacing:0.062px;">9</div>
<div class="t" style="left:53.40px;top:793.00px;font-size:12.6px;line-height:18px;color:#42444a;letter-spacing:0.174px;word-spacing:-0.549px;">Запрос предложений</div>
<div class="t" style="left:356.00px;top:793.00px;font-size:12.6px;line-height:18px;color:#42444a;letter-spacing:0.062px;">7</div>
<div class="t" style="left:413.20px;top:793.00px;font-size:12.6px;line-height:18px;color:#8f919b;letter-spacing:-0.945px;">0%</div>
<div class="t" style="left:31.30px;top:815.00px;font-size:12.6px;line-height:18px;color:#d4d5da;letter-spacing:0.070px;">10</div>
<div class="t" style="left:53.40px;top:815.00px;font-size:12.6px;line-height:18px;color:#c9cad0;letter-spacing:0.004px;">Отсутствует</div>
<div class="t" style="left:356.60px;top:817.00px;font-size:8.5px;line-height:12px;color:#b4b5bc;letter-spacing:-1.859px;">—</div>
<div class="t" style="left:414.30px;top:817.00px;font-size:8.5px;line-height:12px;color:#b4b5bc;letter-spacing:-1.859px;">—</div>
</section>
<section>
<div class="b" style="left:845.00px;top:531.00px;width:829.00px;height:318.00px;background:#eff6fe;border-radius:8px;"></div>
<div class="b" style="left:852.00px;top:585.00px;width:815.00px;height:257.00px;background:#fff;border-radius:8px;"></div>
<svg class="b" style="left:1390px;top:604px" width="220" height="220" viewBox="0 0 220 220"><path d="M110.00 8.55 A100.40 100.40 0 1 1 19.21 66.09 L49.96 80.60 A66.40 66.40 0 1 0 110.00 42.55 Z" fill="#5499ea"/><path d="M19.21 66.09 A100.40 100.40 0 0 1 41.33 35.70 L64.59 60.51 A66.40 66.40 0 0 0 49.96 80.60 Z" fill="#bbd9fb"/><path d="M41.33 35.70 A100.40 100.40 0 0 1 49.30 28.98 L69.85 56.06 A66.40 66.40 0 0 0 64.59 60.51 Z" fill="#a8c6f5"/><path d="M49.30 28.98 A100.40 100.40 0 0 1 55.16 24.85 L73.73 53.33 A66.40 66.40 0 0 0 69.85 56.06 Z" fill="#5f5f9d"/><path d="M55.16 24.85 A100.40 100.40 0 0 1 60.59 21.55 L77.32 51.15 A66.40 66.40 0 0 0 73.73 53.33 Z" fill="#80cb82"/><path d="M60.59 21.55 A100.40 100.40 0 0 1 65.49 18.96 L80.56 49.43 A66.40 66.40 0 0 0 77.32 51.15 Z" fill="#a5e8df"/><path d="M65.49 18.96 A100.40 100.40 0 0 1 70.52 16.64 L83.89 47.90 A66.40 66.40 0 0 0 80.56 49.43 Z" fill="#d2b0e8"/><path d="M70.52 16.64 A100.40 100.40 0 0 1 75.21 14.77 L86.99 46.66 A66.40 66.40 0 0 0 83.89 47.90 Z" fill="#9aa5ee"/><path d="M75.21 14.77 A100.40 100.40 0 0 1 79.99 13.14 L90.15 45.59 A66.40 66.40 0 0 0 86.99 46.66 Z" fill="#5a72da"/><path d="M79.99 13.14 A100.40 100.40 0 0 1 110.00 8.55 L110.00 42.55 A66.40 66.40 0 0 0 90.15 45.59 Z" fill="#8f58bf"/></svg>
<h2 class="t" style="left:854.00px;top:543.00px;font-size:21.6px;line-height:30px;color:#42444a;letter-spacing:0.534px;word-spacing:-1.159px;-webkit-text-stroke:0.15px #42444a;"><span style="position:absolute;left:0.00px;top:0;letter-spacing:0.388px">Рейтинг</span> <span style="position:absolute;left:87.38px;top:0;letter-spacing:0.636px">источников</span></h2>
<div class="t" style="left:862.80px;top:595.00px;font-size:10.8px;line-height:15px;color:#9a9ba6;letter-spacing:0.108px;">Наименование</div>
<div class="t" style="left:1187.50px;top:595.00px;font-size:10.8px;line-height:15px;color:#9a9ba6;letter-spacing:0.143px;">Кол-во</div>
<div class="t" style="left:862.70px;top:615.00px;font-size:12.6px;line-height:18px;color:#8f919b;letter-spacing:0.062px;">1</div>
<div class="t" style="left:884.70px;top:615.00px;font-size:12.6px;line-height:18px;color:#42444a;letter-spacing:0.118px;word-spacing:-0.493px;">Официальный сайт Российской Федерации</div>
<div class="t" style="left:1187.60px;top:615.00px;font-size:12.6px;line-height:18px;color:#42444a;letter-spacing:0.070px;word-spacing:-0.430px;">3 175</div>
<div class="t" style="left:1245.00px;top:615.00px;font-size:12.6px;line-height:18px;color:#8f919b;letter-spacing:-0.609px;">82%</div>
<div class="t" style="left:862.70px;top:637.00px;font-size:12.6px;line-height:18px;color:#8f919b;letter-spacing:0.062px;">2</div>
<div class="t" style="left:884.70px;top:637.00px;font-size:12.6px;line-height:18px;color:#42444a;letter-spacing:0.040px;word-spacing:-0.415px;">ЭТП РТС-тендер. Электронный магазин ЗМО</div>
<div class="t" style="left:1187.60px;top:637.00px;font-size:12.6px;line-height:18px;color:#42444a;letter-spacing:0.073px;">232</div>
<div class="t" style="left:1245.00px;top:637.00px;font-size:12.6px;line-height:18px;color:#8f919b;letter-spacing:-0.945px;">6%</div>
<div class="t" style="left:862.70px;top:660.00px;font-size:12.6px;line-height:18px;color:#8f919b;letter-spacing:0.062px;">3</div>
<div class="t" style="left:884.70px;top:660.00px;font-size:12.6px;line-height:18px;color:#42444a;letter-spacing:0.192px;word-spacing:-0.595px;">Электронный магазин малых закупок г. Санкт-…</div>
<div class="t" style="left:1187.60px;top:660.00px;font-size:12.6px;line-height:18px;color:#42444a;letter-spacing:0.070px;">64</div>
<div class="t" style="left:1245.00px;top:660.00px;font-size:12.6px;line-height:18px;color:#8f919b;letter-spacing:-0.945px;">2%</div>
<div class="t" style="left:862.70px;top:682.00px;font-size:12.6px;line-height:18px;color:#8f919b;letter-spacing:0.062px;">4</div>
<div class="t" style="left:884.70px;top:682.00px;font-size:12.6px;line-height:18px;color:#42444a;letter-spacing:0.218px;word-spacing:-0.659px;">Портал поставщиков (Малые закупки 44фз)</div>
<div class="t" style="left:1187.60px;top:682.00px;font-size:12.6px;line-height:18px;color:#42444a;letter-spacing:0.070px;">44</div>
<div class="t" style="left:1245.00px;top:682.00px;font-size:12.6px;line-height:18px;color:#8f919b;letter-spacing:-0.945px;">1%</div>
<div class="t" style="left:862.70px;top:704.00px;font-size:12.6px;line-height:18px;color:#8f919b;letter-spacing:0.062px;">5</div>
<div class="t" style="left:884.70px;top:704.00px;font-size:12.6px;line-height:18px;color:#42444a;letter-spacing:-0.105px;word-spacing:-0.364px;">BP.ZAKAZRF.RU (Малые закупки 44фз)</div>
<div class="t" style="left:1187.60px;top:704.00px;font-size:12.6px;line-height:18px;color:#42444a;letter-spacing:0.070px;">39</div>
<div class="t" style="left:1245.00px;top:704.00px;font-size:12.6px;line-height:18px;color:#8f919b;letter-spacing:-0.945px;">1%</div>
<div class="t" style="left:862.70px;top:726.00px;font-size:12.6px;line-height:18px;color:#8f919b;letter-spacing:0.062px;">6</div>
<div class="t" style="left:884.70px;top:726.00px;font-size:12.6px;line-height:18px;color:#42444a;letter-spacing:0.266px;word-spacing:-0.641px;">Электронный магазин Ленинградской области</div>
<div class="t" style="left:1187.60px;top:726.00px;font-size:12.6px;line-height:18px;color:#42444a;letter-spacing:0.070px;">34</div>
<div class="t" style="left:1245.00px;top:726.00px;font-size:12.6px;line-height:18px;color:#8f919b;letter-spacing:-0.945px;">1%</div>
<div class="t" style="left:862.70px;top:748.00px;font-size:12.6px;line-height:18px;color:#8f919b;letter-spacing:0.062px;">7</div>
<div class="t" style="left:884.70px;top:748.00px;font-size:12.6px;line-height:18px;color:#42444a;letter-spacing:0.177px;word-spacing:-0.552px;">Электронный магазин Московской обл. (Малы…</div>
<div class="t" style="left:1187.60px;top:748.00px;font-size:12.6px;line-height:18px;color:#42444a;letter-spacing:0.070px;">34</div>
<div class="t" style="left:1245.00px;top:748.00px;font-size:12.6px;line-height:18px;color:#8f919b;letter-spacing:-0.945px;">1%</div>
<div class="t" style="left:862.70px;top:770.00px;font-size:12.6px;line-height:18px;color:#8f919b;letter-spacing:0.062px;">8</div>
<div class="t" style="left:884.70px;top:770.00px;font-size:12.6px;line-height:18px;color:#42444a;letter-spacing:0.027px;word-spacing:-0.486px;">Региональная информационная система Тульск…</div>
<div class="t" style="left:1187.60px;top:770.00px;font-size:12.6px;line-height:18px;color:#42444a;letter-spacing:0.070px;">31</div>
<div class="t" style="left:1245.00px;top:770.00px;font-size:12.6px;line-height:18px;color:#8f919b;letter-spacing:-0.945px;">1%</div>
<div class="t" style="left:862.70px;top:793.00px;font-size:12.6px;line-height:18px;color:#8f919b;letter-spacing:0.062px;">9</div>
<div class="t" style="left:884.70px;top:793.00px;font-size:12.6px;line-height:18px;color:#42444a;letter-spacing:0.055px;word-spacing:-0.533px;">ЕАТ.РФ (ЕАТ Березка) (Малые закупки 44фз)</div>
<div class="t" style="left:1187.60px;top:793.00px;font-size:12.6px;line-height:18px;color:#42444a;letter-spacing:0.070px;">31</div>
<div class="t" style="left:1245.00px;top:793.00px;font-size:12.6px;line-height:18px;color:#8f919b;letter-spacing:-0.945px;">1%</div>
<div class="t" style="left:862.70px;top:815.00px;font-size:12.6px;line-height:18px;color:#8f919b;letter-spacing:0.070px;">10</div>
<div class="t" style="left:884.70px;top:815.00px;font-size:12.6px;line-height:18px;color:#42444a;letter-spacing:0.224px;">Другие</div>
<div class="t" style="left:1187.60px;top:815.00px;font-size:12.6px;line-height:18px;color:#42444a;letter-spacing:0.073px;">187</div>
<div class="t" style="left:1245.00px;top:815.00px;font-size:12.6px;line-height:18px;color:#8f919b;letter-spacing:-0.945px;">5%</div>
</section>
</main>
</div>
</body></html>
